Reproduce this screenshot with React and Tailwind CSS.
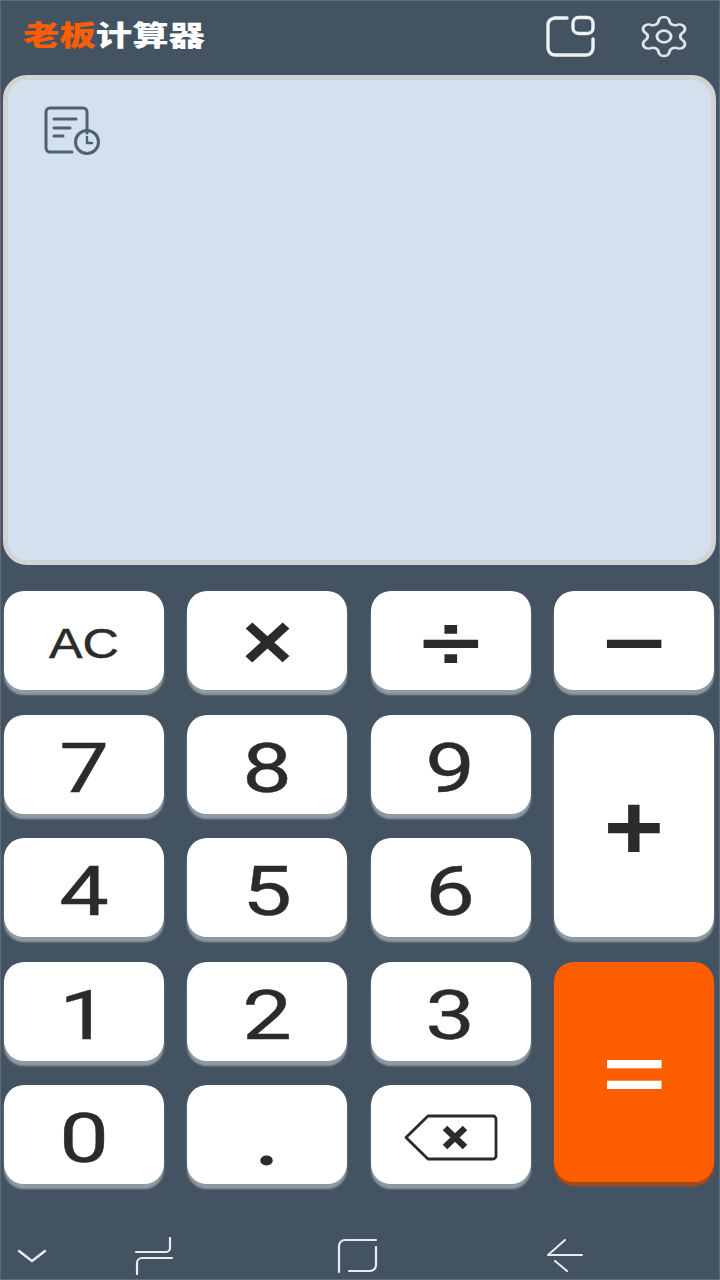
import React from "react";
import { Settings } from "lucide-react";

const SANS = "font-['Liberation_Sans',Arial,sans-serif]";

function Key({ children, className = "h-[99px]", tone = "bg-white text-[#2b2b2b] shadow-[0_5px_2px_#8f9ba3]" }) {
  return (
    <button className={`flex items-center justify-center rounded-[20px] ${tone} ${SANS} ${className}`}>
      {children}
    </button>
  );
}

// 数字键：原图横向拉伸
function Digit({ value }) {
  return (
    <Key>
      <span className="inline-block pt-[9px] font-['Roboto',sans-serif] text-[68px] leading-none scale-x-[1.3] [-webkit-text-stroke:0.4px_#2b2b2b]">
        {value}
      </span>
    </Key>
  );
}

function HistoryIcon() {
  return (
    <svg width="58" height="50" viewBox="0 0 58 50" fill="none" stroke="#4f6070" strokeWidth="3" strokeLinecap="round" strokeLinejoin="round">
      <path d="M28 46H6a4 4 0 0 1-4-4V6a4 4 0 0 1 4-4h33a4 4 0 0 1 4 4v21" />
      <path d="M10 13h22M10 22h16M10 30h9" />
      <circle cx="43" cy="36" r="11.500" />
      <path d="M43 31v6h5" strokeWidth="2.400" />
    </svg>
  );
}

function WindowIcon() {
  return (
    <svg width="50" height="42" viewBox="0 0 50 42" fill="none" stroke="#eef1f3" strokeWidth="3.400" strokeLinecap="round" strokeLinejoin="round">
      <path d="M21 3H9a7 7 0 0 0-7 7v23a7 7 0 0 0 7 7h31a7 7 0 0 0 7-7V24" />
      <rect x="27" y="2.500" width="20" height="16" rx="5.500" />
    </svg>
  );
}

function BackspaceIcon() {
  return (
    <svg className="mt-[6px]" width="94" height="48" viewBox="0 0 94 48" fill="none" stroke="#2b2b2b" strokeLinecap="round" strokeLinejoin="round">
      <path d="M24 2h65a3 3 0 0 1 3 3v37a3 3 0 0 1-3 3H24L2 23.500Z" strokeWidth="2.800" />
      <path d="M41 14l20 19M61 14L41 33" strokeWidth="6.500" strokeLinecap="butt" />
    </svg>
  );
}

export default function App() {
  return (
    <div className="w-[720px] h-[1280px] flex flex-col bg-[#445362] border border-[#5f6d7a] overflow-hidden">
      {/* 顶栏 */}
      <header className="h-[74px] shrink-0 flex items-center pl-[22px] pr-[27px]">
        <h1 className="w-[146px] pb-[8px] origin-left scale-x-[1.3] whitespace-nowrap text-[28px] leading-none font-black font-['Noto_Sans_CJK_SC',sans-serif] text-white">
          <span className="text-[#ff5e00]">老板</span>计算器
        </h1>
        <div className="ml-auto pb-[4px] flex items-center gap-[40px]">
          <WindowIcon />
          <Settings width={56} height={47} preserveAspectRatio="none" strokeWidth={1.300} className="text-[#dfe4e8]" />
        </div>
      </header>

      {/* 显示屏 */}
      <section className="h-[490px] shrink-0 ml-[2px] mr-[3px] rounded-[24px] border-[5px] border-[#d2d3d3] bg-[#d3e0ee] pl-[36px] pt-[26px]">
        <HistoryIcon />
      </section>

      {/* 键盘 */}
      <div className="mt-[26px] px-[3px] grid grid-cols-[160px_160px_160px_160px] grid-rows-[repeat(5,102px)] gap-x-[23.300px] gap-y-[21.600px]">
        <Key>
          <span className="inline-block pt-[6px] text-[43px] leading-none scale-x-[1.17] [-webkit-text-stroke:0.5px_#2b2b2b]">AC</span>
        </Key>
        <Key>
          <span className="inline-block pt-[2px] text-[80px] leading-none font-bold scale-x-[1.1]">×</span>
        </Key>
        <Key>
          <span className="inline-block pt-[4px] text-[76px] leading-none font-bold scale-x-[1.43]">÷</span>
        </Key>
        <Key>
          <span className="inline-block pt-[4px] text-[76px] leading-none font-bold scale-x-[1.43]">−</span>
        </Key>

        <Digit value="7" />
        <Digit value="8" />
        <Digit value="9" />
        <Key className="row-span-2 h-[222px]">
          <span className="inline-block pt-[2px] text-[92px] leading-none font-bold scale-x-[1.12]">+</span>
        </Key>

        <Digit value="4" />
        <Digit value="5" />
        <Digit value="6" />

        <Digit value="1" />
        <Digit value="2" />
        <Digit value="3" />
        <Key
          className="row-span-2 h-[220px]"
          tone="bg-[#ff5e00] text-white shadow-[0_4px_2px_#a84a16]"
        >
          <span className="inline-block pt-[4px] text-[76px] leading-none font-bold scale-x-[1.43]">=</span>
        </Key>

        <Digit value="0" />
        <Key>
          <span className="inline-block pt-[14px] font-['Roboto',sans-serif] text-[68px] leading-none font-bold scale-x-[1.15]">.</span>
        </Key>
        <Key>
          <BackspaceIcon />
        </Key>
      </div>

      {/* 系统导航栏 */}
      <nav className="mt-auto h-[44px] shrink-0 flex items-center pb-[2px] text-[#e8ecef]">
        <svg className="ml-[16px]" width="30" height="16" viewBox="0 0 30 16" fill="none" stroke="currentColor" strokeWidth="2.400" strokeLinecap="round" strokeLinejoin="round">
          <path d="M2 3l13 10L28 3" />
        </svg>
        <svg className="ml-[87px]" width="40" height="38" viewBox="0 0 40 38" fill="none" stroke="currentColor" strokeWidth="2.200" strokeLinecap="round">
          <path d="M36 1v10a4 4 0 0 1-4 4H2M38 21H8a5 5 0 0 0-5 5v11" />
        </svg>
        <svg className="ml-[163px]" width="42" height="36" viewBox="0 0 42 36" fill="none" stroke="currentColor" strokeWidth="2.200" strokeLinecap="round">
          <path d="M39 2H8a6 6 0 0 0-6 6v26M39 9v18a6 6 0 0 1-6 6H12" />
        </svg>
        <svg className="ml-[167px]" width="38" height="36" viewBox="0 0 38 36" fill="none" stroke="currentColor" strokeWidth="2" strokeLinecap="round" strokeLinejoin="round">
          <path d="M19 2L2 17h34M9 23l12 10" />
        </svg>
      </nav>
    </div>
  );
}
